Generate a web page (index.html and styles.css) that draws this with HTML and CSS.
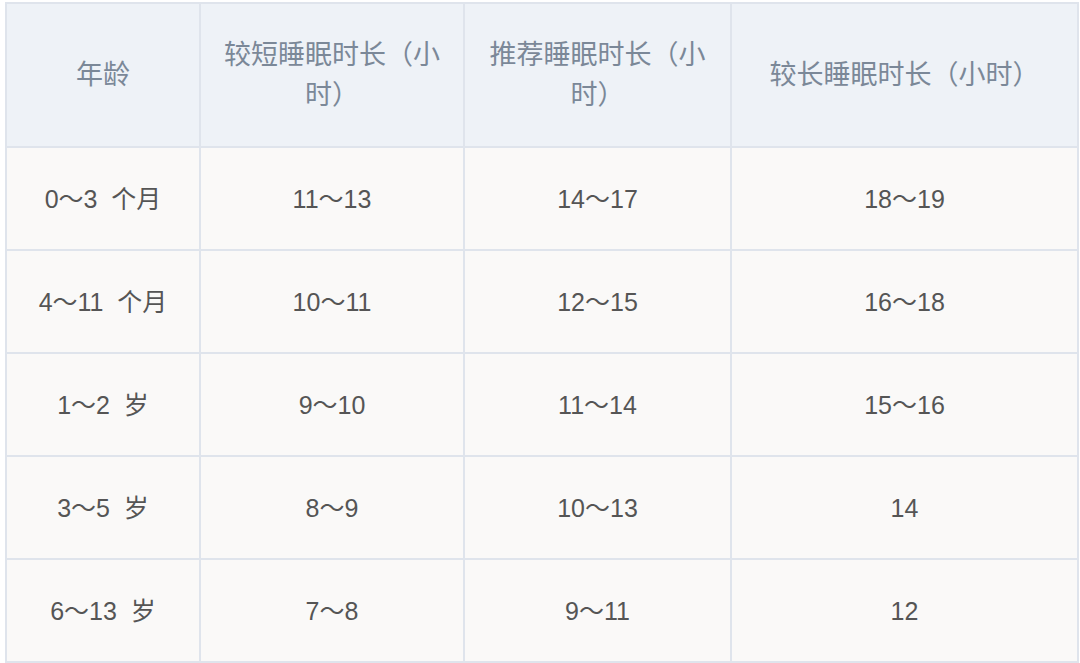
FILE: index.html
```html
<!DOCTYPE html>
<html lang="zh-CN">
<head>
<meta charset="utf-8">
<title>睡眠时长</title>
<link rel="stylesheet" href="styles.css">
</head>
<body>
<table class="sleep-table">
  <colgroup>
    <col class="c1"><col class="c2"><col class="c3"><col class="c4">
  </colgroup>
  <thead>
    <tr class="head-row">
      <th>年龄</th>
      <th>较短睡眠时长（小时）</th>
      <th>推荐睡眠时长（小时）</th>
      <th>较长睡眠时长（小时）</th>
    </tr>
  </thead>
  <tbody>
    <tr><td>0～3&nbsp;&nbsp;个月</td><td>11～13</td><td>14～17</td><td>18～19</td></tr>
    <tr><td>4～11&nbsp;&nbsp;个月</td><td>10～11</td><td>12～15</td><td>16～18</td></tr>
    <tr><td>1～2&nbsp;&nbsp;岁</td><td>9～10</td><td>11～14</td><td>15～16</td></tr>
    <tr><td>3～5&nbsp;&nbsp;岁</td><td>8～9</td><td>10～13</td><td>14</td></tr>
    <tr><td>6～13&nbsp;&nbsp;岁</td><td>7～8</td><td>9～11</td><td>12</td></tr>
  </tbody>
</table>
</body>
</html>
```
FILE: styles.css
```css
html, body {
  margin: 0;
  padding: 0;
  background: #ffffff;
}
body {
  padding: 2px 0 0 5px;
  font-family: "Liberation Sans", "Noto Sans CJK SC", sans-serif;
}
.sleep-table {
  border-collapse: collapse;
  table-layout: fixed;
  width: 1072px;
}
.c1 { width: 194px; }
.c2 { width: 264px; }
.c3 { width: 267px; }
.c4 { width: 347px; }
.sleep-table th,
.sleep-table td {
  border: 2px solid #dfe4ec;
  text-align: center;
  vertical-align: middle;
  padding: 0 18px;
}
.sleep-table th {
  background: #eef2f7;
  color: #7b8898;
  font-family: "Noto Sans CJK SC", sans-serif;
  font-weight: 400;
  font-size: 27px;
  line-height: 40px;
  height: 144px;
  padding-bottom: 4px;
  box-sizing: border-box;
}
.sleep-table td {
  background: #faf9f8;
  color: #555555;
  font-size: 25px;
  line-height: 30px;
  height: 103px;
  box-sizing: border-box;
}
```
